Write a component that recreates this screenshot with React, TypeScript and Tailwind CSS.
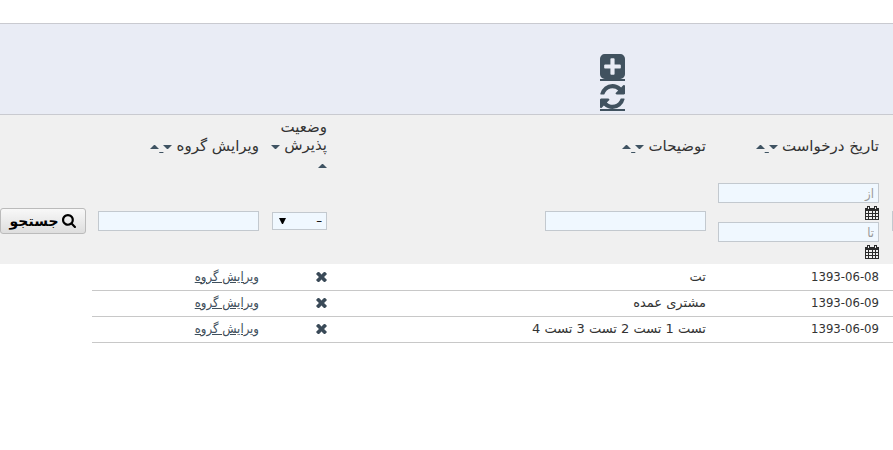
import { useState } from 'react';

const REQUESTS = [
  { id: 1, date: '1393-06-08', description: 'تت' },
  { id: 2, date: '1393-06-09', description: 'مشتری عمده' },
  { id: 3, date: '1393-06-09', description: 'تست 1 تست 2 تست 3 تست 4' },
];

const INPUT_CLASS =
  'block h-5 w-[161px] border border-[#c3c9cf] bg-[#f0f8ff] px-1 text-[13px] leading-4 text-[#333] placeholder:text-[#999] outline-none';

const HEADING_CLASS =
  "font-['DejaVu_Sans',sans-serif] text-[15px] leading-[18px] font-normal";

function PlusSquareIcon() {
  return (
    <svg viewBox="128 128 1536 1536" className="h-[25px] w-[25px]" fill="currentColor" aria-hidden="true">
      <path d="M1408 960v-128q0-26-19-45t-45-19h-320v-320q0-26-19-45t-45-19h-128q-26 0-45 19t-19 45v320h-320q-26 0-45 19t-19 45v128q0 26 19 45t45 19h320v320q0 26 19 45t45 19h128q26 0 45-19t19-45v-320h320q26 0 45-19t19-45zm256-544v960q0 119-84.5 203.5t-203.5 84.5h-960q-119 0-203.5-84.5t-84.5-203.5v-960q0-119 84.5-203.5t203.5-84.5h960q119 0 203.5 84.5t84.5 203.5z" />
    </svg>
  );
}

function RefreshIcon() {
  return (
    <svg viewBox="128 128 1536 1536" className="h-[25px] w-[25px]" fill="currentColor" aria-hidden="true">
      <path d="M1639 1056q0 5-1 7-64 268-268 434.5t-478 166.5q-146 0-282.5-55t-243.5-157l-129 129q-19 19-45 19t-45-19-19-45v-448q0-26 19-45t45-19h448q26 0 45 19t19 45-19 45l-137 137q71 66 161 102t187 36q134 0 250-65t186-179q11-17 53-117 8-23 30-23h192q13 0 22.5 9.5t9.5 22.5zm25-800v448q0 26-19 45t-45 19h-448q-26 0-45-19t-19-45 19-45l138-138q-148-137-349-137-134 0-250 65t-186 179q-11 17-53 117-8 23-30 23h-199q-13 0-22.5-9.5t-9.5-22.5v-7q65-268 270-434.5t480-166.5q146 0 284 55.5t245 156.5l130-129q19-19 45-19t45 19 19 45z" />
    </svg>
  );
}

function SearchIcon() {
  return (
    <svg viewBox="64 128 1664 1664" className="h-[14px] w-[14px]" fill="currentColor" aria-hidden="true">
      <path d="M1216 832q0-185-131.5-316.5t-316.5-131.5-316.5 131.5-131.5 316.5 131.5 316.5 316.5 131.5 316.5-131.5 131.5-316.5zm512 832q0 52-38 90t-90 38q-54 0-90-38l-343-342q-179 124-399 124-143 0-273.5-55.5t-225-150-150-225-55.5-273.5 55.5-273.5 150-225 225-150 273.5-55.5 273.5 55.5 225 150 150 225 55.5 273.5q0 220-124 399l343 343q37 37 37 90z" />
    </svg>
  );
}

function TimesIcon() {
  return (
    <svg viewBox="302 366 1188 1188" className="h-[10px] w-[11px]" fill="currentColor" stroke="currentColor" strokeWidth="60" aria-hidden="true">
      <path d="M1490 1322q0 40-28 68l-136 136q-28 28-68 28t-68-28l-294-294-294 294q-28 28-68 28t-68-28l-136-136q-28-28-28-68t28-68l294-294-294-294q-28-28-28-68t28-68l136-136q28-28 68-28t68 28l294 294 294-294q28-28 68-28t68 28l136 136q28 28 28 68t-28 68l-294 294 294 294q28 28 28 68z" />
    </svg>
  );
}

function CalendarIcon() {
  return (
    <svg viewBox="0 0 14 14" className="h-[14px] w-[14px]" aria-hidden="true">
      <path d="M0 2h14v12H0z M2 0h3v3H2z M9 0h3v3H9z" fill="#2b2b2b" />
      <path
        d="M1 5h2v2H1z M4 5h3v2H4z M8 5h2v2H8z M11 5h2v2h-2z M1 8h2v2H1z M4 8h3v2H4z M8 8h2v2H8z M11 8h2v2h-2z M1 11h2v2H1z M4 11h3v2H4z M8 11h2v2H8z M11 11h2v2h-2z M3 1h1v2H3z M10 1h1v2h-1z"
        fill="#f0f0f0"
      />
    </svg>
  );
}

function SortLinks() {
  return (
    <span className="text-[13px] text-[#3f5362]">
      {' '}
      <a href="#desc" aria-label="مرتب‌سازی نزولی" className="underline">
        <svg viewBox="0 0 9 4" className="inline h-1 w-[9px] align-middle" fill="currentColor">
          <path d="M0 0h9L5 4H4z" />
        </svg>
      </a>
      <span className="underline"> </span>
      <a href="#asc" aria-label="مرتب‌سازی صعودی" className="underline">
        <svg viewBox="0 0 9 4" className="inline h-1 w-[9px] align-middle" fill="currentColor">
          <path d="M4 0h1l4 4H0z" />
        </svg>
      </a>
    </span>
  );
}

function DateFilter({ label }: { label: string }) {
  return (
    <div>
      <input type="text" placeholder={label} aria-label={label} className={INPUT_CLASS} />
      <button type="button" aria-label="تقویم" className="flex h-[19px] items-center">
        <CalendarIcon />
      </button>
    </div>
  );
}

export default function App() {
  const [status, setStatus] = useState('all');

  return (
    <div
      dir="rtl"
      className="min-h-screen overflow-hidden bg-white pt-[23px] font-['DejaVu_Sans_Condensed','DejaVu_Sans',sans-serif] text-[13px] leading-[18px] text-[#333]"
    >
      <div className="flex flex-col items-start gap-[3px] border-y border-[#c9cad0] bg-[#e9ecf5] ps-[268px] pt-[30px] pb-[3px] text-[#41525f]">
        <a href="#new" aria-label="افزودن" className="border-b-2 border-[#41525f]">
          <PlusSquareIcon />
        </a>
        <a href="#refresh" aria-label="بازخوانی" className="border-b-2 border-[#41525f]">
          <RefreshIcon />
        </a>
      </div>

      <table className="w-full table-fixed border-collapse text-right">
        <colgroup>
          <col className="w-[8px]" />
          <col className="w-[173px]" />
          <col />
          <col className="w-[68px]" />
          <col className="w-[173px]" />
          <col className="w-[92px]" />
        </colgroup>
        <thead className="bg-[#f0f0f0]">
          <tr className="h-[62px]">
            <td />
            <th scope="col" className={`${HEADING_CLASS} px-1.5`}>تاریخ درخواست<SortLinks /></th>
            <th scope="col" className={`${HEADING_CLASS} px-1.5`}>توضیحات<SortLinks /></th>
            <th scope="col" className={`${HEADING_CLASS} ps-1.5`}>وضعیت پذیرش<SortLinks /></th>
            <th scope="col" className={`${HEADING_CLASS} px-1.5`}>ویرایش گروه<SortLinks /></th>
            <td />
          </tr>
          <tr className="h-[87px]">
            <td>
              <div className="h-5 w-px bg-[#c3c9cf]" />
            </td>
            <td className="px-1.5 pt-1 pb-px">
              <DateFilter label="از" />
              <DateFilter label="تا" />
            </td>
            <td className="px-1.5">
              <input type="text" aria-label="توضیحات" className={INPUT_CLASS} />
            </td>
            <td className="px-1.5">
              <div className="relative w-[55px]">
                <select
                  aria-label="وضعیت پذیرش"
                  value={status}
                  onChange={(e) => setStatus(e.target.value)}
                  className="block h-[18px] w-full appearance-none border border-[#c3c9cf] bg-[#f0f8ff] px-1 text-[13px] leading-4 text-black"
                >
                  <option value="all">–</option>
                  <option value="yes">بله</option>
                  <option value="no">خیر</option>
                </select>
                <svg viewBox="0 0 7 6" className="pointer-events-none absolute top-1.5 left-[7px] h-1.5 w-[7px]">
                  <path d="M0 0h7L4 6H3z" />
                </svg>
              </div>
            </td>
            <td className="px-1.5">
              <input type="text" aria-label="ویرایش گروه" className={INPUT_CLASS} />
            </td>
            <td className="ps-1.5">
              <button
                type="button"
                className="flex h-[26px] w-full items-center justify-center gap-1 rounded-[3px] border border-[#bbb] bg-linear-to-b from-[#f8f8f8] to-[#dedede] font-['DejaVu_Sans',sans-serif] text-[14px] font-bold text-black"
              >
                <SearchIcon />
                جستجو
              </button>
            </td>
          </tr>
        </thead>
        <tbody>
          {REQUESTS.map((request) => (
            <tr key={request.id} className="h-[26px]">
              <td className="border-b border-[#c8c8c8]" />
              <td className="border-b border-[#c8c8c8] px-1.5">{request.date}</td>
              <td className="border-b border-[#c8c8c8] px-1.5 font-['DejaVu_Sans',sans-serif]">{request.description}</td>
              <td className="border-b border-[#c8c8c8] px-1.5 text-[#3a4a58]">
                <TimesIcon />
              </td>
              <td className="border-b border-[#c8c8c8] px-1.5">
                <a href="#group" className="text-[#3f4f5c] underline">ویرایش گروه</a>
              </td>
              <td />
            </tr>
          ))}
        </tbody>
      </table>
    </div>
  );
}
